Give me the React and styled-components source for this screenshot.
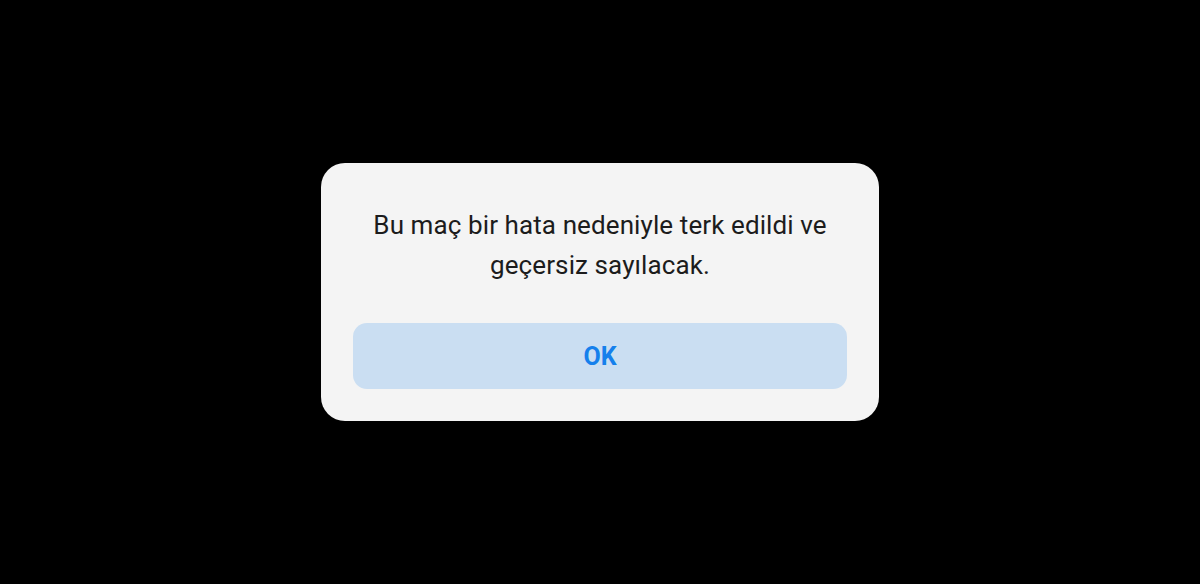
import React from "react";
import styled, { createGlobalStyle } from "styled-components";

const Global = createGlobalStyle`
  html, body { margin: 0; padding: 0; background: #000; }
  #root { height: 584px; }
`;

const Screen = styled.div`
  height: 584px;
  width: 1200px;
  background: #000;
  display: flex;
  align-items: flex-start;
  justify-content: center;
  padding-top: 163px;
  box-sizing: border-box;
`;

const Dialog = styled.div`
  width: 558px;
  box-sizing: border-box;
  background: #f4f4f4;
  border-radius: 24px;
  padding: 42px 32px 32px;
  display: flex;
  flex-direction: column;
  align-items: center;
`;

const Message = styled.p`
  margin: 0;
  font-family: "Roboto", "Noto Sans", sans-serif;
  font-size: 26px;
  line-height: 40px;
  color: #1c1c1c;
  text-align: center;
  letter-spacing: 0.1px;
`;

const Button = styled.button`
  margin-top: 38px;
  width: 100%;
  height: 66px;
  border: none;
  border-radius: 14px;
  background: #cadef2;
  color: #1580ec;
  font-family: "Roboto", "Noto Sans", sans-serif;
  font-weight: 700;
  font-size: 25px;
  cursor: pointer;
`;

export default function App() {
  return (
    <>
      <Global />
      <Screen>
        <Dialog>
          <Message>
            Bu maç bir hata nedeniyle terk edildi ve
            <br />
            geçersiz sayılacak.
          </Message>
          <Button>OK</Button>
        </Dialog>
      </Screen>
    </>
  );
}
